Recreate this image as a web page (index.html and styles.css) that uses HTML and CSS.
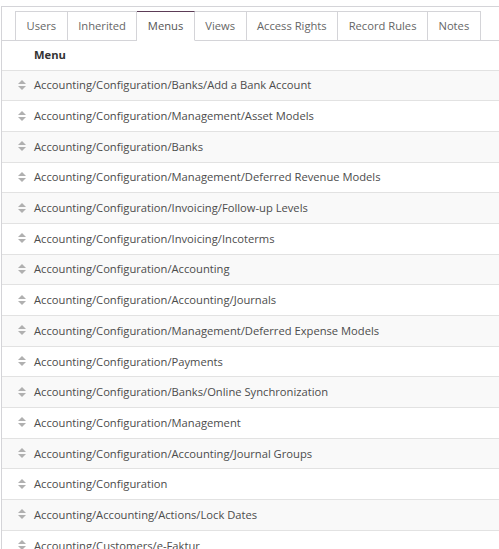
FILE: index.html
```html
<!DOCTYPE html>
<html>
<head>
    <title>Group Menus</title>
    <link rel="stylesheet" href="styles.css">
</head>
<body>
    <div class="sheet">
        <ul class="tabs">
            <li class="tab">Users</li>
            <li class="tab">Inherited</li>
            <li class="tab active">Menus</li>
            <li class="tab">Views</li>
            <li class="tab">Access Rights</li>
            <li class="tab">Record Rules</li>
            <li class="tab">Notes</li>
        </ul>
        <table class="list">
            <thead>
                <tr><th></th><th>Menu</th></tr>
            </thead>
            <tbody>
                <tr><td class="handle"><span class="sort"></span></td><td>Accounting/Configuration/Banks/Add a Bank Account</td></tr>
                <tr><td class="handle"><span class="sort"></span></td><td>Accounting/Configuration/Management/Asset Models</td></tr>
                <tr><td class="handle"><span class="sort"></span></td><td>Accounting/Configuration/Banks</td></tr>
                <tr><td class="handle"><span class="sort"></span></td><td>Accounting/Configuration/Management/Deferred Revenue Models</td></tr>
                <tr><td class="handle"><span class="sort"></span></td><td>Accounting/Configuration/Invoicing/Follow-up Levels</td></tr>
                <tr><td class="handle"><span class="sort"></span></td><td>Accounting/Configuration/Invoicing/Incoterms</td></tr>
                <tr><td class="handle"><span class="sort"></span></td><td>Accounting/Configuration/Accounting</td></tr>
                <tr><td class="handle"><span class="sort"></span></td><td>Accounting/Configuration/Accounting/Journals</td></tr>
                <tr><td class="handle"><span class="sort"></span></td><td>Accounting/Configuration/Management/Deferred Expense Models</td></tr>
                <tr><td class="handle"><span class="sort"></span></td><td>Accounting/Configuration/Payments</td></tr>
                <tr><td class="handle"><span class="sort"></span></td><td>Accounting/Configuration/Banks/Online Synchronization</td></tr>
                <tr><td class="handle"><span class="sort"></span></td><td>Accounting/Configuration/Management</td></tr>
                <tr><td class="handle"><span class="sort"></span></td><td>Accounting/Configuration/Accounting/Journal Groups</td></tr>
                <tr><td class="handle"><span class="sort"></span></td><td>Accounting/Configuration</td></tr>
                <tr><td class="handle"><span class="sort"></span></td><td>Accounting/Accounting/Actions/Lock Dates</td></tr>
                <tr><td class="handle"><span class="sort"></span></td><td>Accounting/Customers/e-Faktur</td></tr>
            </tbody>
        </table>
    </div>
</body>
</html>
```

FILE: styles.css
```css
body {
    margin: 0;
    font-family: "Open Sans", "Noto Sans", sans-serif;
    font-size: 11.2px;
    color: #4c4c4c;
    background-color: #fff;
    overflow: hidden;
}

.sheet {
    margin: 6px 0 0 1px;
    border-top: 1px solid #d4d4d8;
    border-left: 1px solid #d4d4d8;
}

.tabs {
    display: flex;
    list-style: none;
    margin: 0;
    padding: 4px 0 0 13px;
    border-bottom: 1px solid #d4d4d8;
}

.tab {
    flex-shrink: 0;
    white-space: nowrap;
    height: 28px;
    line-height: 28px;
    padding: 0 10.5px;
    margin-bottom: -1px;
    border: 1px solid #d4d4d8;
    border-left: none;
    color: #666;
    background-color: #fff;
}

.tab:first-child {
    border-left: 1px solid #d4d4d8;
}

.tab.active {
    border-top: 1px solid #5c3d57;
    border-bottom-color: #fff;
    color: #555;
}

.list {
    width: 100%;
    border-collapse: collapse;
}

.list th,
.list td {
    height: 28.7px;
    padding: 0 0 1px 0;
    text-align: left;
    border-bottom: 1px solid #e2e2e2;
    white-space: nowrap;
}

.list th {
    font-weight: bold;
    color: #333;
    height: 27.5px;
}

.list tbody tr:nth-child(odd) {
    background-color: #f9f9f9;
}

.list .handle {
    width: 32px;
}

.sort {
    display: block;
    position: relative;
    width: 8px;
    height: 10px;
    margin-left: 16px;
}

.sort::before,
.sort::after {
    content: "";
    position: absolute;
    left: 0;
    border-left: 4px solid transparent;
    border-right: 4px solid transparent;
}

.sort::before {
    top: 0;
    border-bottom: 4px solid #b0b0b0;
}

.sort::after {
    bottom: 0;
    border-top: 4px solid #b0b0b0;
}
```
